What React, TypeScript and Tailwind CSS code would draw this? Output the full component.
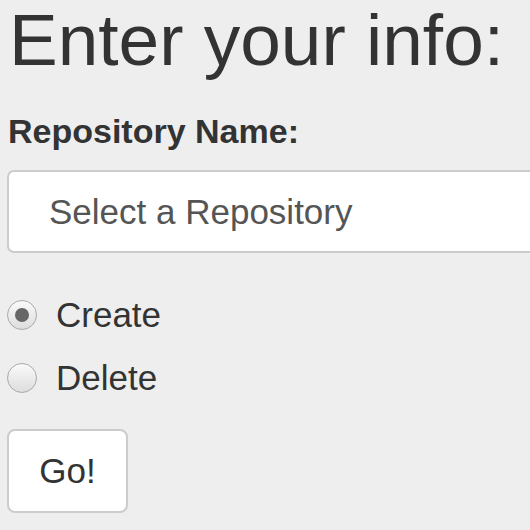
import React, { useState } from "react";

const App = () => {
  const [action, setAction] = useState("create");

  return (
    <div className="min-h-screen w-full overflow-hidden bg-[#eeeeee] text-[#333333] font-['Liberation_Sans',Arial,sans-serif]">
      <div className="flex flex-col pl-[7px]">
        <h1 className="pl-[2px] text-[73px] leading-[80px] font-normal whitespace-nowrap">
          Enter your info:
        </h1>
        <label className="mt-[31px] pl-[1px] text-[34px] leading-[40px] font-bold">
          Repository Name:
        </label>
        <div className="mt-[19px] flex h-[83px] w-[560px] shrink-0 items-center rounded-[7px] border-2 border-[#cccccc] bg-white pl-[40px] text-[35px] leading-[40px] text-[#555555]">
          Select a Repository
        </div>
        <div className="mt-[42px] flex flex-col gap-[23px]">
          {[
            { key: "create", label: "Create" },
            { key: "delete", label: "Delete" },
          ].map((item) => (
            <div
              key={item.key}
              className="flex cursor-pointer items-center gap-[19px]"
              onClick={() => setAction(item.key)}
            >
              <div className="flex h-[30px] w-[30px] items-center justify-center rounded-full border border-[#aaaaaa] bg-gradient-to-b from-[#fafafa] to-[#dddddd]">
                {action === item.key && (
                  <div className="h-[14px] w-[14px] rounded-full bg-[#666666]" />
                )}
              </div>
              <span className="text-[35px] leading-[40px]">{item.label}</span>
            </div>
          ))}
        </div>
        <button className="mt-[31px] flex h-[84px] w-[121px] items-center justify-center rounded-[8px] border-2 border-[#cccccc] bg-white text-[35px] leading-[40px] text-[#333333]">
          Go!
        </button>
      </div>
    </div>
  );
};

export default App;
